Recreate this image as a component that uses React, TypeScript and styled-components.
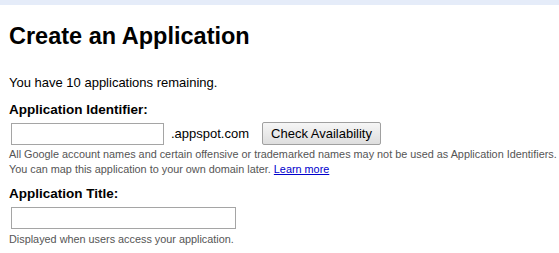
import React from "react";
import styled, { createGlobalStyle } from "styled-components";

const Global = createGlobalStyle`
  html, body { margin: 0; padding: 0; background: #fff; }
  body { font-family: Arial, "Liberation Sans", sans-serif; color: #000; }
`;

const TopBar = styled.div`
  height: 5px;
  background: #e5ecf9;
`;

const Page = styled.div`
  padding: 0 9px;
`;

const Title = styled.h1`
  margin: 18px 0 0;
  font-size: 23.5px;
  line-height: 26px;
  font-weight: bold;
`;

const Intro = styled.p`
  margin: 26px 0 0;
  font-size: 13px;
  line-height: 15px;
`;

const Field = styled.div<{ $top: number }>`
  margin-top: ${(p) => p.$top}px;
`;

const Label = styled.label`
  display: block;
  font-size: 13.5px;
  font-weight: bold;
  line-height: 16px;
`;

const Row = styled.div`
  display: flex;
  align-items: center;
  height: 23px;
  margin-top: 4px;
  padding-left: 2px;
`;

const TextInput = styled.input<{ $w: number }>`
  box-sizing: border-box;
  width: ${(p) => p.$w}px;
  height: 22px;
  border: 1px solid #a5a5a5;
  margin: 0;
  padding: 2px;
  font-size: 13px;
`;

const Suffix = styled.span`
  font-size: 13px;
  margin-left: 7px;
  color: #000;
`;

const Button = styled.button`
  box-sizing: border-box;
  margin-left: 13px;
  height: 23px;
  padding: 0 8px;
  font-family: Arial, "Liberation Sans", sans-serif;
  font-size: 13px;
  color: #000;
  border: 1px solid #a0a0a0;
  border-radius: 2px;
  background: linear-gradient(#f6f6f6, #dedede);
`;

const Hints = styled.div<{ $top: number }>`
  margin-top: ${(p) => p.$top}px;
`;

const Hint = styled.div`
  font-size: 10.85px;
  line-height: 15px;
  color: #555;
  white-space: nowrap;
`;

const Link = styled.a`
  color: #00c;
  text-decoration: underline;
`;

export default function App() {
  return (
    <>
      <Global />
      <TopBar />
      <Page>
        <Title>Create an Application</Title>
        <Intro>You have 10 applications remaining.</Intro>
        <Field $top={12}>
          <Label>Application Identifier:</Label>
          <Row>
            <TextInput $w={153} />
            <Suffix>.appspot.com</Suffix>
            <Button>Check Availability</Button>
          </Row>
          <Hints $top={2}>
            <Hint>
              All Google account names and certain offensive or trademarked names may not be used as Application Identifiers.
            </Hint>
            <Hint>
              You can map this application to your own domain later. <Link href="#">Learn more</Link>
            </Hint>
          </Hints>
        </Field>
        <Field $top={9}>
          <Label>Application Title:</Label>
          <Row>
            <TextInput $w={225} />
          </Row>
          <Hints $top={3}>
            <Hint>Displayed when users access your application.</Hint>
          </Hints>
        </Field>
      </Page>
    </>
  );
}
